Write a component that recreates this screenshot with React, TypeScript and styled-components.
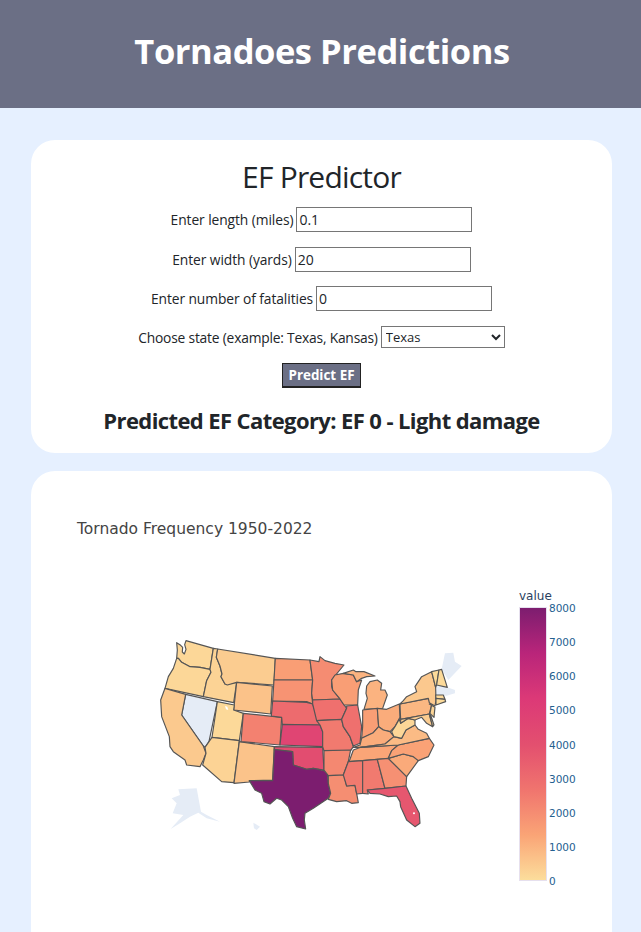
import styled, { createGlobalStyle } from "styled-components";

const GlobalStyle = createGlobalStyle`
    html, body {
        margin: 0;
        padding: 0;
        background-color: #e6f0ff;
        height: 932px;
        overflow: hidden;
    }
    body {
        font-family: "Open Sans", "Noto Sans", sans-serif;
        color: #212529;
    }
`;

const Header = styled.header`
    height: 108px;
    padding: 0 0 8px 3px;
    box-sizing: border-box;
    background-color: #6b6f85;
    display: flex;
    align-items: center;
    justify-content: center;
    h1 {
        margin: 0;
        color: white;
        font-size: 34.5px;
        font-weight: 700;
        letter-spacing: -0.45px;
    }
`;

const Main = styled.main`
    padding: 32px 29px 0 31px;
    display: flex;
    flex-direction: column;
    gap: 18px;
`;

const Card = styled.section`
    background-color: white;
    border-radius: 24px;
`;

const FormCard = styled(Card)`
    height: 313px;
    padding-top: 18px;
    box-sizing: border-box;
    display: flex;
    flex-direction: column;
    align-items: center;
    h2 {
        margin: 0 0 11px;
        height: 38px;
        line-height: 38px;
        font-size: 30px;
        font-weight: 500;
        letter-spacing: -0.8px;
    }
    h3 {
        margin: 17px 0 0;
        font-size: 22px;
        line-height: 30px;
        font-weight: 700;
        letter-spacing: -0.6px;
    }
`;

const Row = styled.label`
    display: flex;
    align-items: center;
    justify-content: center;
    gap: 3px;
    height: 25px;
    margin-bottom: 14.7px;
    font-size: 13.8px;
    letter-spacing: -0.08px;
`;

const SelectRow = styled(Row)`
    height: 22px;
    margin-bottom: 15px;
    letter-spacing: -0.2px;
`;

const NumberInput = styled.input`
    width: 176px;
    height: 25px;
    box-sizing: border-box;
    border: 1px solid #767676;
    padding: 1px 2px;
    font: inherit;
    font-size: 14px;
    color: #212529;
    background: white;
`;

const StateSelect = styled.select`
    width: 124px;
    height: 22px;
    box-sizing: border-box;
    border: 1px solid #767676;
    border-radius: 0;
    font: inherit;
    font-size: 13px;
    color: #212529;
    background: white;
`;

const PredictButton = styled.button`
    width: 79px;
    height: 25px;
    padding: 0;
    background-color: #6b6f85;
    color: white;
    border: 1px solid #222;
    border-bottom-width: 2px;
    font-family: inherit;
    font-size: 13.4px;
    font-weight: 700;
`;

const ChartCard = styled(Card)`
    height: 520px;
    border-bottom-left-radius: 0;
    border-bottom-right-radius: 0;
    overflow: hidden;
`;

const ChartSvg = styled.svg`
    display: block;
    width: 581px;
    height: 520px;
`;

const ChartTitle = styled.text`
    font-family: "DejaVu Sans", Verdana, sans-serif;
    font-size: 15.5px;
    fill: #444;
`;

const ColorbarTitle = styled.text`
    font-family: "DejaVu Sans", Verdana, sans-serif;
    font-size: 12px;
    fill: #2a3f5f;
`;

const TickLabel = styled.text`
    font-family: "DejaVu Sans", Verdana, sans-serif;
    font-size: 10.5px;
    fill: #24608f;
`;

const stops = [
    [252, 222, 156],
    [250, 164, 118],
    [240, 116, 110],
    [227, 79, 111],
    [220, 57, 119],
    [185, 37, 122],
    [124, 29, 111],
];

const scaleColor = (value: number) => {
    const t = (Math.min(value, 8000) / 8000) * (stops.length - 1);
    const i = Math.min(Math.floor(t), stops.length - 2);
    const f = t - i;
    const c = stops[i].map((v, k) => Math.round(v + (stops[i + 1][k] - v) * f));
    return `rgb(${c[0]},${c[1]},${c[2]})`;
};

// outlines traced from the picture, in a 1020x630 box (3x the map size)
const states: [number, string][] = [
    [150, "110,38 122,46 128,52 127,66 133,72 138,58 134,44 138,32 220,55 210,118 180,112 150,110 125,97 115,85 110,85 112,60"],
    [150, "110,85 115,85 125,97 150,110 180,112 210,118 213,127 200,152 190,200 75,175 85,140 100,115"],
    [250, "220,55 233,57 229,82 240,108 246,132 243,140 255,162 290,157 281,218 190,200 200,152 213,127 210,118"],
    [420, "233,57 406,85 402,165 290,157 262,165 255,162 243,140 246,132 240,108 229,82"],
    [650, "290,157 397,168 392,252 281,240"],
    [480, "75,175 137,193 125,255 190,348 198,370 190,390 180,410 140,405 135,390 100,365 90,350 88,320 65,260 62,210"],
    [120, "232,215 283,225 281,240 310,250 298,332 216,322"],
    [250, "216,322 298,332 282,458 245,455 188,405 198,370 195,352 207,335"],
    [620, "298,335 403,350 398,450 328,452 328,456 282,460"],
    [2300, "310,250 425,262 420,345 303,335"],
    [1500, "406,85 510,90 518,150 402,150"],
    [1800, "402,150 518,150 515,190 518,222 500,215 398,213"],
    [3000, "398,213 500,217 518,222 528,250 540,285 427,283 425,262 394,258"],
    [4600, "427,283 540,285 548,305 548,350 420,345"],
    [4100, "403,350 548,352 552,420 520,415 500,418 460,405 458,365 403,360"],
    [8000, "403,358 458,365 460,405 500,418 520,415 552,422 562,430 565,460 572,490 565,505 520,535 495,550 493,570 497,597 470,590 458,565 445,530 425,510 410,505 390,522 372,515 365,490 345,480 328,452 398,452"],
    [2000, "510,90 537,95 540,80 555,92 585,100 612,105 575,150 575,170 578,180 600,207 518,210 515,190 518,150"],
    [2800, "518,210 600,207 620,235 605,268 530,272 518,222"],
    [2500, "530,272 605,268 610,290 630,320 640,350 632,362 552,362 548,350 548,305 540,285"],
    [2100, "552,362 632,360 625,395 610,435 565,437 552,420"],
    [1950, "565,437 612,435 620,468 645,465 650,490 655,518 635,520 620,512 590,515 565,508 572,490 565,460"],
    [1500, "575,150 585,135 610,130 640,135 650,155 665,150 655,180 653,225 612,225 600,207 578,180"],
    [2800, "620,228 653,225 665,290 660,340 640,348 630,320 610,290 605,268 620,235"],
    [1000, "610,130 640,120 648,125 672,125 705,138 680,140 665,145 650,155 640,135"],
    [1000, "680,168 690,155 712,150 725,160 722,180 735,180 742,195 728,235 672,238 682,205 678,190"],
    [1500, "668,240 712,235 716,290 700,308 665,325 668,290"],
    [1150, "712,235 740,238 778,222 780,262 765,290 750,305 730,300 716,290"],
    [1150, "640,352 660,345 665,325 700,308 716,290 730,300 750,305 762,320 735,342 662,352"],
    [1300, "625,395 630,388 640,360 662,352 775,345 755,362 745,385 712,388 668,392"],
    [2500, "625,395 668,392 668,490 650,492 645,466 620,468 610,435"],
    [2500, "668,392 712,388 735,475 682,480 685,492 668,490"],
    [1900, "712,388 745,385 770,410 800,440 798,468 735,475"],
    [3700, "682,480 735,475 798,468 815,505 838,550 840,580 825,590 800,570 782,530 780,515 770,498 745,500 720,492 690,490"],
    [1200, "745,385 790,372 820,380 835,392 800,440 770,410"],
    [1400, "745,385 755,362 775,345 868,325 882,345 865,380 835,392 820,380 790,372"],
    [800, "662,352 735,342 762,320 785,325 798,300 825,285 835,298 860,310 868,325 775,345"],
    [180, "755,305 765,290 778,268 782,280 805,265 825,270 825,285 798,300 785,325 762,320"],
    [900, "780,222 865,205 875,225 868,252 782,268"],
    [420, "782,268 868,252 878,290 860,280 845,262 825,270 805,265 782,280"],
    [100, "868,252 872,255 882,285 878,290"],
    [200, "868,222 885,232 882,262 870,250 875,225"],
    [500, "790,212 800,200 830,185 825,170 845,140 875,125 887,172 888,212 885,228 868,218 865,205 780,222"],
    [100, "875,125 897,120 890,165 887,172"],
    [100, "897,120 905,118 922,172 890,165"],
    [120, "887,195 910,195 915,208 888,205"],
    [100, "888,205 915,208 917,215 888,225"],
];

const missing = [
    "915,70 940,68 945,95 965,108 925,150 905,118",
    "890,168 922,172 945,180 945,190 920,197 887,195",
    "115,478 170,475 183,545 200,555 240,575 200,565 175,548 150,560 120,580 92,597 130,555 98,550 110,520 95,505 120,495",
    "340,578 360,590 350,600 342,595",
];

const ticks = [8000, 7000, 6000, 5000, 4000, 3000, 2000, 1000, 0];

const UsaMap = () => (
    <g transform="translate(109 159) scale(0.3333)">
        {missing.map((points) => (
            <polygon key={points} points={points} fill="#e5ecf6" />
        ))}
        <polygon points="137,193 232,215 207,335 195,352 190,348 125,255" fill="#e5ecf6" stroke="#555" strokeWidth="3.5" strokeLinejoin="round" />
        {states.map(([value, points]) => (
            <polygon key={points} points={points} fill={scaleColor(value)} stroke="#555" strokeWidth="3.5" strokeLinejoin="round" />
        ))}
        <polygon points="255,228 262,230 265,240 258,238" fill="white" />
        <circle cx="822" cy="550" r="3" fill="white" />
    </g>
);

const Colorbar = () => (
    <g>
        <defs>
            <linearGradient id="bar" x1="0" y1="1" x2="0" y2="0">
                {stops.map((c, i) => (
                    <stop key={i} offset={i / (stops.length - 1)} stopColor={`rgb(${c.join(",")})`} />
                ))}
            </linearGradient>
        </defs>
        <ColorbarTitle x="488" y="129">value</ColorbarTitle>
        <rect x="488.5" y="136.5" width="27" height="273" fill="url(#bar)" stroke="#e6e0ee" />
        {ticks.map((t) => (
            <TickLabel key={t} x="518" y={137 + ((8000 - t) / 8000) * 273 + 4}>{t}</TickLabel>
        ))}
    </g>
);

export default function App() {
    return (
        <>
            <GlobalStyle />
            <Header>
                <h1>Tornadoes Predictions</h1>
            </Header>
            <Main>
                <FormCard>
                    <h2>EF Predictor</h2>
                    <Row>
                        Enter length (miles)
                        <NumberInput defaultValue="0.1" />
                    </Row>
                    <Row>
                        Enter width (yards)
                        <NumberInput defaultValue="20" />
                    </Row>
                    <Row>
                        Enter number of fatalities
                        <NumberInput defaultValue="0" />
                    </Row>
                    <SelectRow>
                        Choose state (example: Texas, Kansas)
                        <StateSelect defaultValue="Texas">
                            <option>Texas</option>
                            <option>Kansas</option>
                        </StateSelect>
                    </SelectRow>
                    <PredictButton>Predict EF</PredictButton>
                    <h3>Predicted EF Category: EF 0 - Light damage</h3>
                </FormCard>
                <ChartCard>
                    <ChartSvg viewBox="0 0 581 520">
                        <ChartTitle x="46" y="63">Tornado Frequency 1950-2022</ChartTitle>
                        <UsaMap />
                        <Colorbar />
                    </ChartSvg>
                </ChartCard>
            </Main>
        </>
    );
}
